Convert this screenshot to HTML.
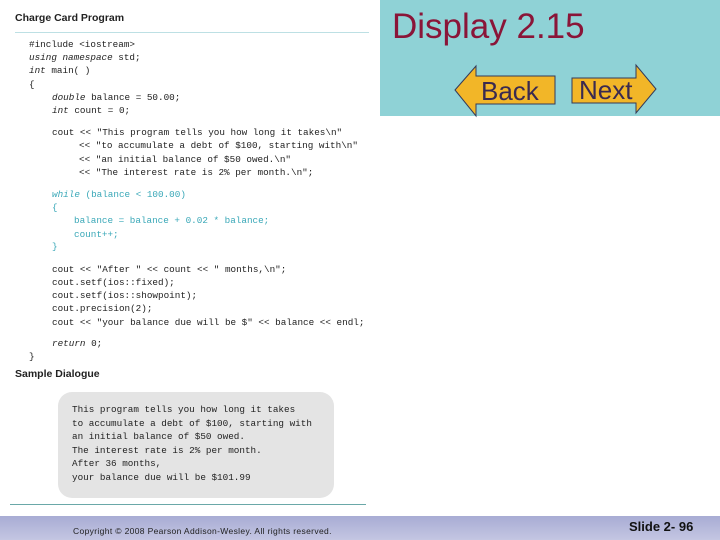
<!DOCTYPE html>
<html><head><style>
body{margin:0;width:720px;height:540px;position:relative;background:#fff;overflow:hidden;font-family:"Liberation Sans",sans-serif}
.pat{position:absolute;left:380px;top:0;width:340px;height:116px;background:#8fd2d6}
.c{position:absolute;font-family:"Liberation Mono",monospace;font-size:9.3px;line-height:12px;white-space:pre;color:#222}
.t{color:#3aa8b8}
i{font-style:italic}
.h{position:absolute;font-weight:bold;font-size:10.5px;color:#222}
</style></head><body>
<div class="pat"></div>
<div style="position:absolute;left:392px;top:7px;font-size:35px;color:#8a1538">Display 2.15</div>
<svg style="position:absolute;left:440px;top:60px" width="230" height="60">
<polygon points="15,30 36,6 36,16 115,16 115,44 36,44 36,56" fill="#f2b628" stroke="#333a5a" stroke-width="1"/>
<polygon points="132,18 196,18 196,5 216,29 196,53 196,43 132,43" fill="#f2b628" stroke="#333a5a" stroke-width="1"/>
<text x="41" y="40" font-family="Liberation Sans" font-size="26" fill="#3a2a50">Back</text>
<text x="139" y="39" font-family="Liberation Sans" font-size="26" fill="#3a2a50">Next</text>
</svg>
<div class="h" style="left:15px;top:12px">Charge Card Program</div>
<div style="position:absolute;left:15px;top:32px;width:354px;height:1px;background:#bde0e4"></div>
<div class="c" style="left:29px;top:39px">#include &lt;iostream&gt;</div>
<div class="c" style="left:29px;top:52px"><i>using namespace</i> std;</div>
<div class="c" style="left:29px;top:65px"><i>int</i> main( )</div>
<div class="c" style="left:29px;top:79px">{</div>
<div class="c" style="left:52px;top:92px"><i>double</i> balance = 50.00;</div>
<div class="c" style="left:52px;top:105px"><i>int</i> count = 0;</div>
<div class="c" style="left:52px;top:127px">cout &lt;&lt; "This program tells you how long it takes\n"</div>
<div class="c" style="left:79px;top:140px">&lt;&lt; "to accumulate a debt of $100, starting with\n"</div>
<div class="c" style="left:79px;top:154px">&lt;&lt; "an initial balance of $50 owed.\n"</div>
<div class="c" style="left:79px;top:167px">&lt;&lt; "The interest rate is 2% per month.\n";</div>
<div class="c t" style="left:52px;top:189px"><i>while</i> (balance &lt; 100.00)</div>
<div class="c t" style="left:52px;top:202px">{</div>
<div class="c t" style="left:74px;top:215px">balance = balance + 0.02 * balance;</div>
<div class="c t" style="left:74px;top:229px">count++;</div>
<div class="c t" style="left:52px;top:241px">}</div>
<div class="c" style="left:52px;top:264px">cout &lt;&lt; "After " &lt;&lt; count &lt;&lt; " months,\n";</div>
<div class="c" style="left:52px;top:277px">cout.setf(ios::fixed);</div>
<div class="c" style="left:52px;top:290px">cout.setf(ios::showpoint);</div>
<div class="c" style="left:52px;top:303px">cout.precision(2);</div>
<div class="c" style="left:52px;top:317px">cout &lt;&lt; "your balance due will be $" &lt;&lt; balance &lt;&lt; endl;</div>
<div class="c" style="left:52px;top:338px"><i>return</i> 0;</div>
<div class="c" style="left:29px;top:351px">}</div>
<div class="h" style="left:15px;top:368px">Sample Dialogue</div>
<div style="position:absolute;left:58px;top:392px;width:276px;height:106px;background:#e4e4e4;border-radius:14px"></div>
<div class="c" style="left:72px;top:403px;line-height:13.6px">This program tells you how long it takes
to accumulate a debt of $100, starting with
an initial balance of $50 owed.
The interest rate is 2% per month.
After 36 months,
your balance due will be $101.99</div>
<div style="position:absolute;left:10px;top:504px;width:356px;height:1px;background:#6aa8a8"></div>
<div style="position:absolute;left:0;top:516px;width:720px;height:24px;background:linear-gradient(#a8acd4,#c4c6e2)"></div>
<div style="position:absolute;left:73px;top:526px;font-size:8.5px;letter-spacing:0.35px;color:#222">Copyright © 2008 Pearson Addison-Wesley. All rights reserved.</div>
<div style="position:absolute;left:629px;top:519px;font-size:13px;font-weight:bold;color:#111">Slide 2- 96</div>
</body></html>
